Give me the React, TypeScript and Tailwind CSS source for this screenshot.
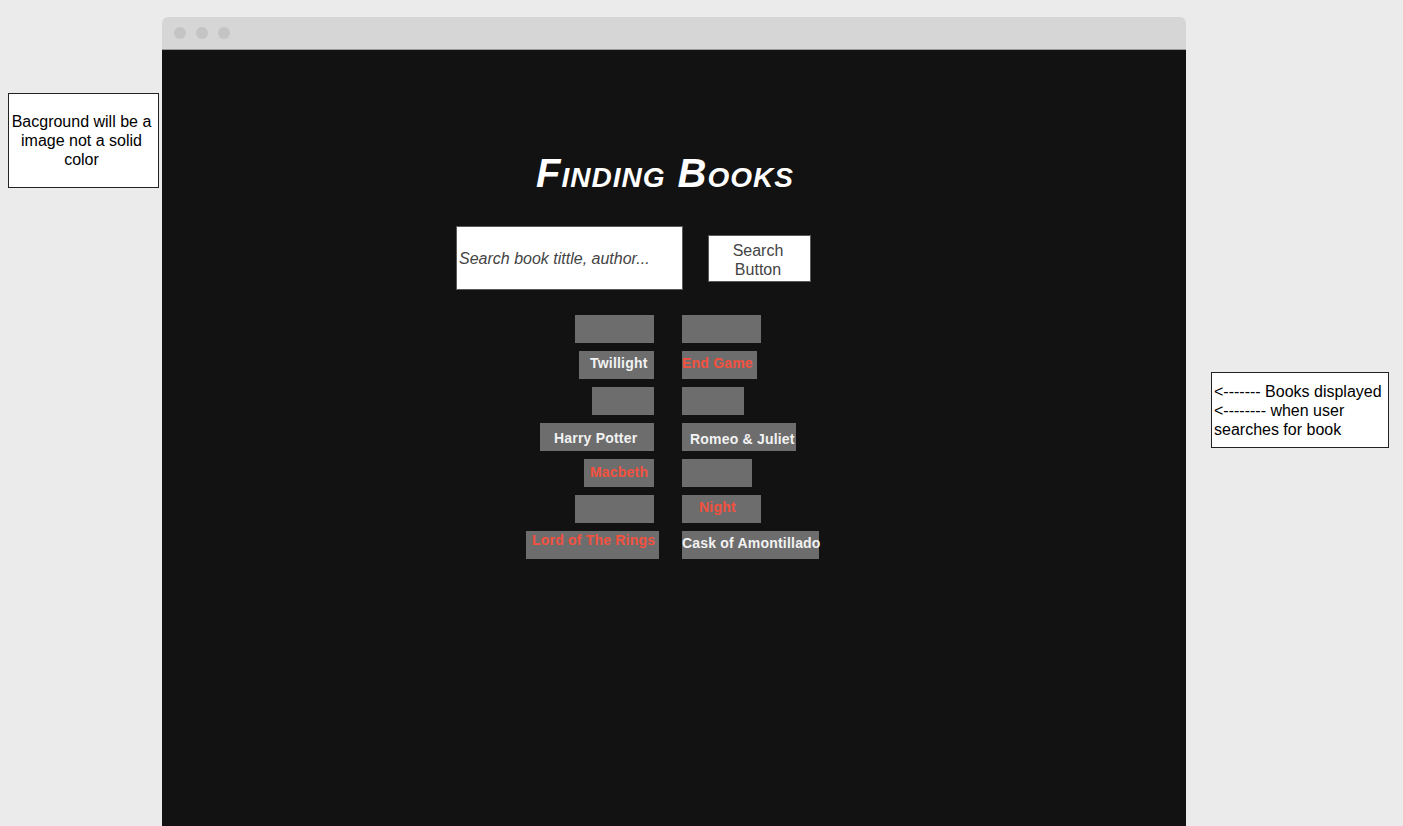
import React from "react";

type Book = { w: string; label?: string; red?: boolean; pad?: string; extra?: string };

const left: Book[] = [
  { w: "w-[79px]" },
  { w: "w-[75px]", label: "Twillight", pad: "pl-[11px] pb-[4px]" },
  { w: "w-[62px]" },
  { w: "w-[114px]", label: "Harry Potter", pad: "pl-[14px] pt-[2px]" },
  { w: "w-[70px]", label: "Macbeth", red: true, pad: "pl-[6px] pb-[2px]" },
  { w: "w-[79px]" },
  { w: "w-[133px]", label: "Lord of The Rings", red: true, pad: "pl-[6px] pb-[10px]", extra: "mr-[-5px]" },
];

const right: Book[] = [
  { w: "w-[79px]" },
  { w: "w-[75px]", label: "End Game", red: true, pad: "pl-0 pb-[4px]" },
  { w: "w-[62px]" },
  { w: "w-[114px]", label: "Romeo & Juliet", pad: "pl-[8px] pt-[4px]" },
  { w: "w-[70px]" },
  { w: "w-[79px]", label: "Night", red: true, pad: "pl-[17px] pb-[4px]" },
  { w: "w-[137px]", label: "Cask of Amontillado", pad: "pl-0 pb-[4px]" },
];

function BookBox({ b }: { b: Book }) {
  return (
    <div
      className={`${b.w} ${b.pad ?? ""} ${b.extra ?? ""} h-[28px] bg-[#6d6d6d] flex items-center whitespace-nowrap text-[14px] font-bold leading-[16px] tracking-[0.2px] ${
        b.red ? "text-[#f4513f]" : "text-[#f2f2f2]"
      }`}
    >
      {b.label ?? ""}
    </div>
  );
}

export default function App() {
  return (
    <div className="h-[826px] w-[1403px] overflow-hidden bg-[#ebebeb] font-['Liberation_Sans',Arial,sans-serif] flex items-start">
      <div className="ml-[8px] mt-[93px] w-[151px] h-[95px] shrink-0 bg-white border border-[#222] flex items-center justify-center text-center text-[16px] leading-[19px] text-black pr-[4px]">
        Bacground will be a image not a solid color
      </div>

      <div className="ml-[3px] mt-[17px] w-[1024px] h-[809px] shrink-0 flex flex-col">
        <div className="h-[33px] rounded-t-[6px] bg-[#d6d6d6] border-b border-[#9a9a9a] flex items-center gap-[10px] pl-[12px]">
          <span className="w-[12px] h-[12px] rounded-full bg-[#c4c4c4]" />
          <span className="w-[12px] h-[12px] rounded-full bg-[#c4c4c4]" />
          <span className="w-[12px] h-[12px] rounded-full bg-[#c4c4c4]" />
        </div>
        <div className="flex-1 bg-[#121212] flex flex-col">
          <div className="pt-[100px] pr-[18px] text-center">
            <h1 className="text-[40px] leading-[46px] font-bold italic text-white tracking-[1px] [font-variant:small-caps]">
              Finding Books
            </h1>
          </div>

          <div className="mt-[30px] ml-[294px] flex items-center gap-[25px]">
            <div className="w-[227px] h-[64px] bg-white border border-[#5a5a5a] flex items-center pl-[2px] pt-[2px]">
              <span className="italic text-[16px] text-[#444]">Search book tittle, author...</span>
            </div>
            <div className="w-[103px] h-[47px] bg-white border border-[#5a5a5a] flex items-center justify-center text-center text-[16px] leading-[19px] text-[#444] pr-[3px] pt-[3px]">
              Search
              <br />
              Button
            </div>
          </div>

          <div className="mt-[25px] ml-[352px] flex gap-[28px]">
            <div className="w-[140px] flex flex-col items-end gap-[8px]">
              {left.map((b, i) => (
                <BookBox key={i} b={b} />
              ))}
            </div>
            <div className="w-[140px] flex flex-col items-start gap-[8px]">
              {right.map((b, i) => (
                <BookBox key={i} b={b} />
              ))}
            </div>
          </div>
        </div>
      </div>

      <div className="ml-[25px] mt-[372px] w-[178px] h-[76px] shrink-0 bg-white border border-[#222] flex items-center text-left text-[16px] leading-[19px] text-black pl-[2px]">
        <div>
          &lt;------- Books displayed
          <br />
          &lt;-------- when user
          <br />
          searches for book
        </div>
      </div>
    </div>
  );
}
